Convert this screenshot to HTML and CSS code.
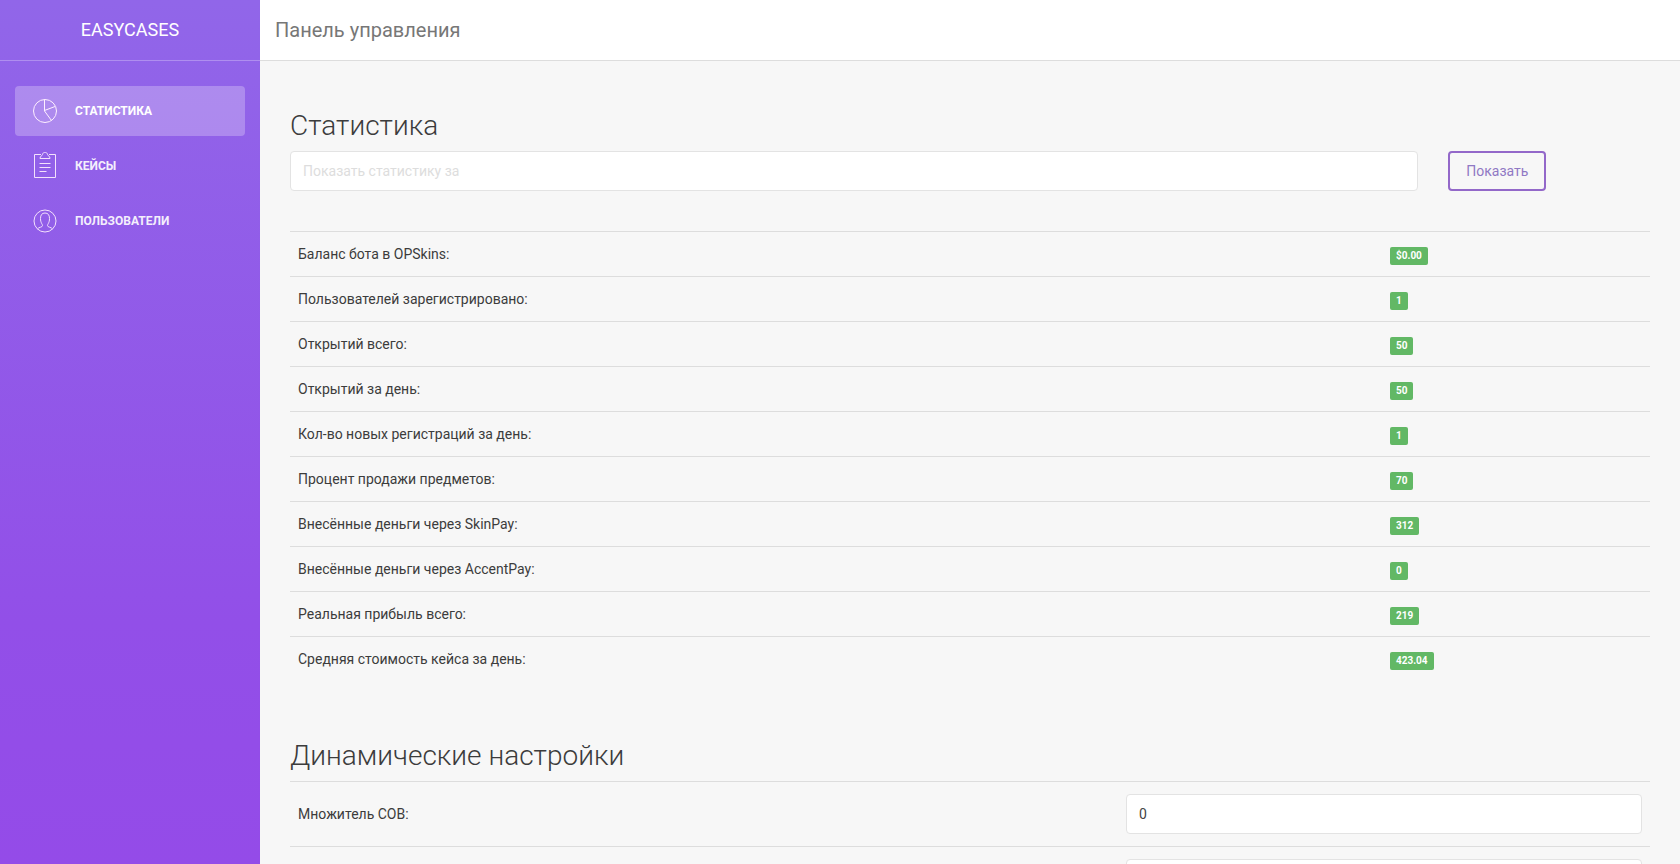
FILE: index.html
```html
<!DOCTYPE html>
<html lang="ru">
<head>
<meta charset="utf-8">
<title>Панель управления</title>
<link rel="stylesheet" href="styles.css">
</head>
<body>
<div class="wrapper">
  <aside class="sidebar">
    <a class="logo" href="#">EASYCASES</a>
    <nav class="menu">
      <a class="menu-item active" href="#">
        <svg class="icon" viewBox="0 0 28 28"><circle cx="14" cy="14" r="11.5"/><path d="M13.5 2.5V14l7 9.500M13.500 13.500l10.500-4"/></svg>
        <span>Статистика</span>
      </a>
      <a class="menu-item" href="#">
        <svg class="icon" viewBox="0 0 28 28"><path d="M10 2.500H3.500v23h21v-23H18M9 6.500c0-3 2-2 2.500-4 .5-3 4.500-3 5 0 .5 2 2.500 1 2.500 4zM8.500 11.500h11M8.500 15.500h11M8.500 19.500h7"/></svg>
        <span>Кейсы</span>
      </a>
      <a class="menu-item" href="#">
        <svg class="icon" viewBox="0 0 28 28"><circle cx="14" cy="14" r="11"/><path d="M6.500 22c1-2 5-1.500 5-3.500 0-1.500-2-2.500-2-7 0-3.500 1.500-5.500 4.500-5.500s4.500 2 4.500 5.500c0 4.500-2 5.500-2 7 0 2 4 1.500 5 3.500"/></svg>
        <span>Пользователи</span>
      </a>
    </nav>
  </aside>
  <div class="main">
    <header class="navbar"><a class="brand" href="#">Панель управления</a></header>
    <main class="content">
      <section class="section">
        <h1 class="title">Статистика</h1>
        <form class="filter">
          <div class="filter-field"><input class="control" type="text" placeholder="Показать статистику за" aria-label="Показать статистику за"></div>
          <div class="filter-action"><button class="button" type="button">Показать</button></div>
        </form>
        <table class="table stats">
          <tr><td>Баланс бота в OPSkins:</td><td class="value"><span class="label">$0.00</span></td></tr>
          <tr><td>Пользователей зарегистрировано:</td><td class="value"><span class="label">1</span></td></tr>
          <tr><td>Открытий всего:</td><td class="value"><span class="label">50</span></td></tr>
          <tr><td>Открытий за день:</td><td class="value"><span class="label">50</span></td></tr>
          <tr><td>Кол-во новых регистраций за день:</td><td class="value"><span class="label">1</span></td></tr>
          <tr><td>Процент продажи предметов:</td><td class="value"><span class="label">70</span></td></tr>
          <tr><td>Внесённые деньги через SkinPay:</td><td class="value"><span class="label">312</span></td></tr>
          <tr><td>Внесённые деньги через AccentPay:</td><td class="value"><span class="label">0</span></td></tr>
          <tr><td>Реальная прибыль всего:</td><td class="value"><span class="label">219</span></td></tr>
          <tr><td>Средняя стоимость кейса за день:</td><td class="value"><span class="label">423.04</span></td></tr>
        </table>
      </section>
      <section class="section">
        <h2 class="title">Динамические настройки</h2>
        <table class="table settings">
          <tr><td><label for="multiplier">Множитель СОВ:</label></td><td class="field"><input class="control" id="multiplier" type="text" value="0"></td></tr>
          <tr><td></td><td class="field"><input class="control" type="text" aria-label="Значение"></td></tr>
        </table>
      </section>
    </main>
  </div>
</div>
</body>
</html>
```
FILE: styles.css
```css
* { box-sizing: border-box; }

body {
  margin: 0;
  background: #f7f7f7;
  color: #3c3c3c;
  font: 14px/20px Roboto, "Noto Sans", sans-serif;
}

a { color: inherit; text-decoration: none; }

.wrapper {
  display: flex;
  height: 100vh;
  overflow: hidden;
}

.sidebar {
  flex: 0 0 260px;
  background: linear-gradient(#9166e9, #924fe8 72%, #944be8);
  color: #fff;
}

.logo {
  display: block;
  height: 61px;
  border-bottom: 1px solid #af8eef;
  font-size: 18px;
  line-height: 60px;
  text-align: center;
}

.menu {
  display: flex;
  flex-direction: column;
  gap: 5px;
  padding: 25px 15px;
}

.menu-item {
  display: flex;
  align-items: center;
  gap: 16px;
  height: 50px;
  padding: 0 16px;
  border-radius: 4px;
  font-size: 12px;
  font-weight: 700;
  text-transform: uppercase;
  opacity: .9;
}

.menu-item.active {
  background: rgba(255, 255, 255, .26);
  opacity: 1;
}

.icon {
  width: 28px;
  height: 28px;
  fill: none;
  stroke: #fff0ff;
  stroke-width: 1;
}

.main {
  flex: 1;
  min-width: 0;
  overflow: hidden;
}

.navbar {
  height: 61px;
  padding: 0 15px;
  border-bottom: 1px solid #ddd;
  background: #fff;
  color: #777;
  font-size: 20px;
  line-height: 60px;
}

.content { padding: 45px 30px; }

.section { margin-bottom: 55px; }

.title {
  margin: 0 0 5px;
  font-size: 28px;
  font-weight: 300;
  line-height: 40px;
}

.filter {
  display: flex;
  margin: 0 -15px 40px;
}

.filter-field {
  flex: 0 0 83.3333%;
  padding: 0 15px;
}

.filter-action { padding: 0 15px; }

.control {
  display: block;
  width: 100%;
  height: 40px;
  padding: 8px 12px;
  border: 1px solid #e3e3e3;
  border-radius: 4px;
  background: #fff;
  color: #444;
  font: inherit;
}

.control::placeholder { color: #ddd; opacity: 1; }

.button {
  height: 40px;
  padding: 0 16px;
  border: 2px solid #9368c9;
  border-radius: 4px;
  background: transparent;
  color: #9079c4;
  font: inherit;
}

.table {
  width: 100%;
  border-collapse: separate;
  border-spacing: 0;
  table-layout: fixed;
}

.table td {
  padding: 12px 8px;
  border-top: 1px solid #ddd;
  vertical-align: middle;
}

.table .value {
  width: 268px;
  padding: 15px 8px 11px;
}

.settings .field { width: 532px; }

.label {
  display: block;
  width: max-content;
  padding: 0 6px;
  border-radius: 2px;
  background: #62b865;
  color: #fff;
  font-size: 10px;
  font-weight: 700;
  line-height: 18px;
}
```
